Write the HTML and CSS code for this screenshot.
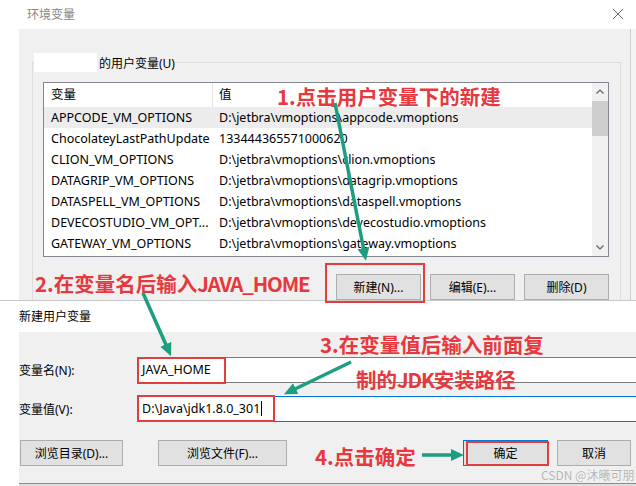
FILE: index.html
```html
<!DOCTYPE html>
<html lang="zh-CN">
<head>
    <meta charset="UTF-8">
    <title>环境变量</title>
    <link rel="stylesheet" href="styles.css">
</head>
<body>
<div class="shot">

    <!-- background window: 环境变量 -->
    <section class="env-dialog">
        <div class="env-title">
            <span>环境变量</span>
            <svg class="close-x" width="12" height="12" viewBox="0 0 12 12">
                <path d="M1 1 L11 11 M11 1 L1 11" stroke="#6a6a6a" stroke-width="1" fill="none"/>
            </svg>
        </div>
        <div class="env-main">
            <div class="env-body">
                <fieldset class="user-vars">
                    <legend><span class="redacted"></span>的用户变量(U)</legend>
                    <div class="listbox">
                        <div class="list-table">
                            <div class="list-head">
                                <span class="col-name">变量</span>
                                <span class="col-value head-sep">值</span>
                            </div>
                            <div class="list-row selected">
                                <span class="col-name">APPCODE_VM_OPTIONS</span>
                                <span class="col-value">D:\jetbra\vmoptions\appcode.vmoptions</span>
                            </div>
                            <div class="list-row">
                                <span class="col-name">ChocolateyLastPathUpdate</span>
                                <span class="col-value">133444365571000620</span>
                            </div>
                            <div class="list-row">
                                <span class="col-name">CLION_VM_OPTIONS</span>
                                <span class="col-value">D:\jetbra\vmoptions\clion.vmoptions</span>
                            </div>
                            <div class="list-row">
                                <span class="col-name">DATAGRIP_VM_OPTIONS</span>
                                <span class="col-value">D:\jetbra\vmoptions\datagrip.vmoptions</span>
                            </div>
                            <div class="list-row">
                                <span class="col-name">DATASPELL_VM_OPTIONS</span>
                                <span class="col-value">D:\jetbra\vmoptions\dataspell.vmoptions</span>
                            </div>
                            <div class="list-row">
                                <span class="col-name">DEVECOSTUDIO_VM_OPT...</span>
                                <span class="col-value">D:\jetbra\vmoptions\devecostudio.vmoptions</span>
                            </div>
                            <div class="list-row">
                                <span class="col-name">GATEWAY_VM_OPTIONS</span>
                                <span class="col-value">D:\jetbra\vmoptions\gateway.vmoptions</span>
                            </div>
                        </div>
                        <div class="scrollbar">
                            <svg class="sb-arrow" width="16" height="17" viewBox="0 0 16 17">
                                <path d="M4.5 10.5 L8 7 L11.5 10.5" stroke="#606060" stroke-width="1.2" fill="none"/>
                            </svg>
                            <div class="sb-thumb"></div>
                            <div class="sb-track"></div>
                            <svg class="sb-arrow" width="16" height="17" viewBox="0 0 16 17">
                                <path d="M4.5 6.5 L8 10 L11.5 6.5" stroke="#606060" stroke-width="1.2" fill="none"/>
                            </svg>
                        </div>
                    </div>
                    <div class="btn-row">
                        <button class="win-btn">新建(N)...</button>
                        <button class="win-btn">编辑(E)...</button>
                        <button class="win-btn">删除(D)</button>
                    </div>
                </fieldset>
            </div>
            <div class="edge-strip"></div>
        </div>
    </section>

    <!-- foreground window: 新建用户变量 -->
    <section class="new-dialog">
        <div class="new-title">新建用户变量</div>
        <div class="new-body">
            <div class="field-row">
                <label class="field-label">变量名(N):</label>
                <div class="field-input">JAVA_HOME</div>
            </div>
            <div class="field-row second">
                <label class="field-label">变量值(V):</label>
                <div class="field-input focused">D:\Java\jdk1.8.0_301<span class="caret"></span></div>
            </div>
            <div class="dlg-buttons">
                <button class="win-btn browse-dir">浏览目录(D)...</button>
                <button class="win-btn browse-file">浏览文件(F)...</button>
                <button class="win-btn ok-btn">确定</button>
                <button class="win-btn cancel-btn">取消</button>
            </div>
        </div>
        <div class="new-bottom"></div>
    </section>

    <!-- annotations drawn on top of the screenshot -->
    <div class="red-box box-new"></div>
    <div class="red-box box-name"></div>
    <div class="red-box box-value"></div>
    <div class="red-box box-ok"></div>

    <div class="note note-1">1.点击用户变量下的新建</div>
    <div class="note note-2">2.在变量名后输入<span class="tight">JAVA_HOME</span></div>
    <div class="note note-3a">3.在变量值后输入前面复</div>
    <div class="note note-3b">制的<span class="tight">JDK</span>安装路径</div>
    <div class="note note-4">4.点击确定</div>

    <svg class="arrows" width="636" height="486" viewBox="0 0 636 486">
        <defs>
            <marker id="head" markerUnits="userSpaceOnUse" markerWidth="14" markerHeight="14"
                    refX="3" refY="7" orient="auto">
                <path d="M0 1 L13 7 L0 13 z" fill="#1d9e80"/>
            </marker>
        </defs>
        <g stroke="#1d9e80" stroke-width="3.5" fill="none" marker-end="url(#head)">
            <line x1="335" y1="103" x2="364" y2="251"/>
            <line x1="143" y1="293" x2="167" y2="347"/>
            <line x1="351" y1="362" x2="293" y2="390"/>
            <line x1="422" y1="455" x2="454" y2="455"/>
        </g>
    </svg>

    <div class="watermark">CSDN @沐曦可朋</div>
</div>
</body>
</html>
```

FILE: styles.css
```css
body {
    margin: 0;
    background: #ffffff;
    font-family: "Noto Sans", "Noto Sans CJK SC", sans-serif;
    font-size: 12px;
    color: #000;
}

.shot {
    position: relative;
    width: 636px;
    height: 486px;
    overflow: hidden;
}

/* ---------- 环境变量 window ---------- */

.env-dialog {
    height: 300px;
    overflow: hidden;
}

.env-title {
    height: 28px;
    display: flex;
    align-items: center;
    justify-content: space-between;
    padding: 0 12px 1px 27px;
    color: #858585;
}

.env-main {
    display: flex;
    height: 271px;
    padding-left: 19px;
}

.env-body {
    flex: 1;
    background: #f0f0f0;
    padding: 24px 9px 0 13px;
}

.edge-strip {
    width: 5px;
    background: #f4f4f4;
    border-left: 1px solid #cfcfcf;
}

.user-vars {
    margin: 0;
    padding: 0 11px 0 10px;
    min-width: 0;
    height: 300px;
    border: 1px solid #dcdcdc;
}

.user-vars legend {
    display: flex;
    align-items: center;
    height: 19px;
    padding: 0;
    margin-left: -9px;
}

.redacted {
    display: inline-block;
    width: 63px;
    height: 19px;
    background: #ffffff;
    margin-right: 2px;
}

.listbox {
    display: flex;
    height: 173px;
    margin-top: 10px;
    border: 1px solid #828790;
    background: #ffffff;
}

.list-table {
    flex: 1;
    min-width: 0;
    font-size: 12.5px;
}

.list-head,
.list-row {
    display: flex;
    white-space: nowrap;
}

.list-head {
    height: 24px;
    line-height: 24px;
}

.list-row {
    height: 21px;
    line-height: 21px;
}

.list-row.selected {
    background: #ececec;
}

.col-name {
    width: 168px;
    padding: 0 2px 0 7px;
    box-sizing: border-box;
    overflow: hidden;
    flex-shrink: 0;
}

.col-value {
    padding-left: 7px;
    overflow: hidden;
}

.head-sep {
    border-left: 1px solid #e3e3e3;
    padding-left: 6px;
    flex: 1;
}

.scrollbar {
    width: 16px;
    display: flex;
    flex-direction: column;
    background: #f0f0f0;
}

.sb-arrow {
    display: block;
}

.sb-thumb {
    height: 35px;
    margin-top: 1px;
    background: #cdcdcd;
}

.sb-track {
    flex: 1;
}

.btn-row {
    display: flex;
    justify-content: flex-end;
    gap: 9px;
    margin-top: 17px;
}

.win-btn {
    height: 26px;
    width: 85px;
    padding: 0;
    font-family: "Noto Sans", "Noto Sans CJK SC", sans-serif;
    font-size: 12px;
    color: #000;
    background: #e1e1e1;
    border: 1px solid #adadad;
    border-radius: 0;
}

/* ---------- 新建用户变量 window ---------- */

.new-dialog {
    height: 186px;
    border-top: 1px solid #c9c9c9;
    box-sizing: border-box;
    padding-left: 19px;
    overflow: hidden;
}

.new-title {
    height: 31px;
    line-height: 31px;
    white-space: nowrap;
}

.new-body {
    height: 151px;
    box-sizing: border-box;
    background: #f0f0f0;
    padding-top: 25px;
}

.field-row {
    display: flex;
    align-items: center;
}

.field-row.second {
    margin-top: 13px;
}

.field-label {
    width: 118px;
    flex-shrink: 0;
}

.field-input {
    flex: 1;
    height: 26px;
    box-sizing: border-box;
    line-height: 24px;
    padding-left: 4px;
    background: #ffffff;
    border: 1px solid #7a7a7a;
    border-right: none;
    white-space: nowrap;
    font-size: 12.5px;
}

.field-input.focused {
    border-color: #0078d7;
}

.caret {
    display: inline-block;
    width: 1px;
    height: 15px;
    margin-left: 1px;
    background: #000;
    vertical-align: -3px;
}

.dlg-buttons {
    display: flex;
    margin-top: 18px;
    padding: 0 5px 0 1px;
}

.browse-dir {
    width: 103px;
}

.browse-file {
    width: 129px;
    margin-left: 35px;
}

.ok-btn {
    margin-left: auto;
    border-color: #0078d7;
}

.cancel-btn {
    width: 74px;
    margin-left: 9px;
}

.new-bottom {
    height: 3px;
    border-top: 1px solid #8c8c8c;
    background: #dedede;
}

/* ---------- annotations ---------- */

.red-box {
    position: absolute;
    border: 2.5px solid #e43d3d;
    box-sizing: border-box;
}

.box-new   { left: 325px; top: 263px; width: 100px; height: 40px; }
.box-name  { left: 137px; top: 357px; width: 89px;  height: 27px; }
.box-value { left: 137px; top: 395px; width: 138px; height: 27px; }
.box-ok    { left: 466px; top: 441px; width: 83px;  height: 25px; }

.note {
    position: absolute;
    font-family: "Noto Sans CJK SC", sans-serif;
    font-weight: 700;
    font-size: 20.5px;
    line-height: 21px;
    color: #e8383d;
    white-space: nowrap;
}

.note .tight {
    letter-spacing: -1.2px;
}

.note-1  { left: 277px; top: 86px; }
.note-2  { left: 35px;  top: 273px; }
.note-3a { left: 320px; top: 334px; }
.note-3b { left: 356px; top: 369px; }
.note-4  { left: 315px; top: 446px; }

.arrows {
    position: absolute;
    left: 0;
    top: 0;
    pointer-events: none;
}

.watermark {
    position: absolute;
    left: 541px;
    top: 467px;
    font-family: "Noto Sans CJK SC", sans-serif;
    font-size: 12px;
    line-height: 15px;
    white-space: nowrap;
    color: #b4b4b4;
    text-shadow: 0 0 1px #ffffff;
}
```
